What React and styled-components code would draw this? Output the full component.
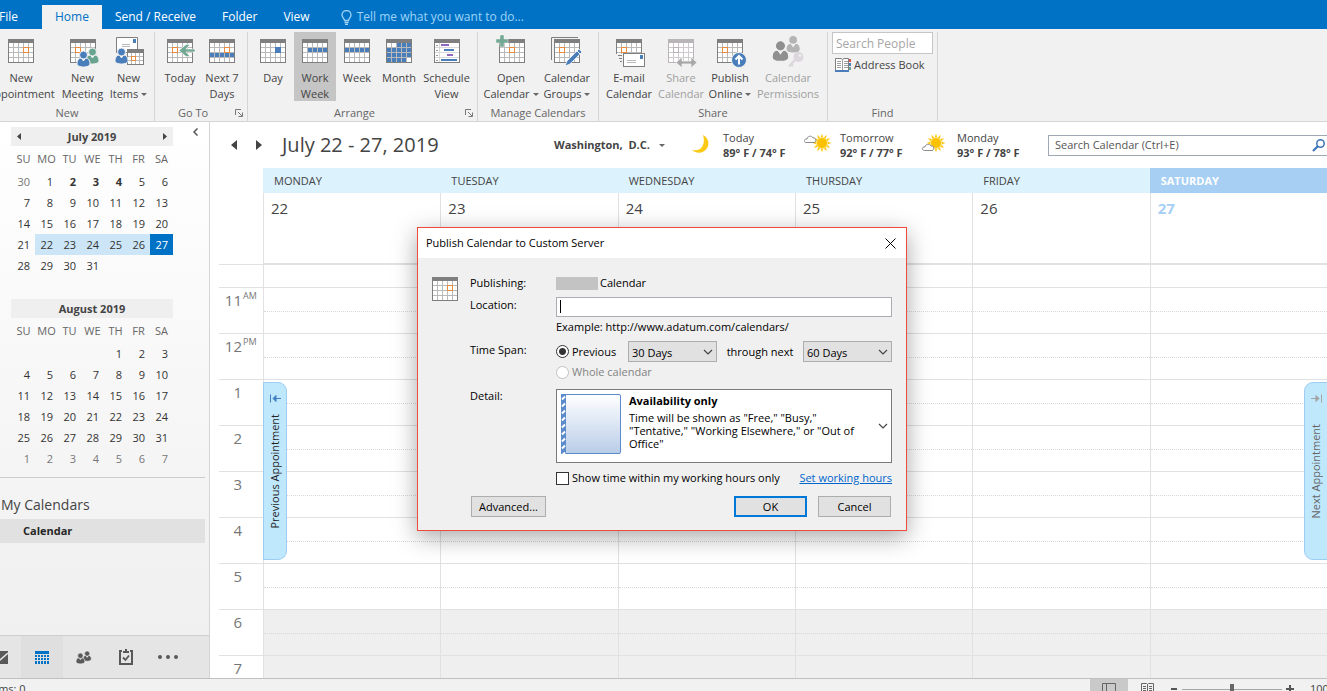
import { useState } from 'react';
import styled, { createGlobalStyle, css } from 'styled-components';

const GlobalStyle = createGlobalStyle`
  * {
    box-sizing: border-box;
  }

  body {
    margin: 0;
    overflow: hidden;
    background: #ffffff;
    color: #444444;
    font-family: 'Open Sans', 'Noto Sans', sans-serif;
    font-size: 11px;
    line-height: 16px;
  }

  button, input, select {
    font: inherit;
    color: inherit;
    margin: 0;
  }

  button {
    padding: 0;
    border: 0;
    background: none;
    white-space: nowrap;
  }

  svg {
    display: block;
    flex: none;
  }
`;

const Window = styled.div`
  display: flex;
  flex-direction: column;
  height: 100vh;
  overflow: hidden;
`;

/* ---------- tabs ---------- */

const TabBar = styled.nav`
  display: flex;
  flex: none;
  align-items: flex-end;
  height: 29px;
  background: #0072c6;
`;

const Tab = styled.button`
  height: 24px;
  padding: 0 13px;
  font-size: 12px;
  color: ${(p) => (p.$active ? '#0072c6' : '#ffffff')};
  background: ${(p) => (p.$active ? '#f1f1f1' : 'transparent')};
`;

const FileTab = styled(Tab)`
  width: 60px;
  margin-left: -18px;
  padding: 0 0 0 17px;
  text-align: left;
`;

const TellMe = styled.button`
  display: flex;
  align-items: center;
  gap: 5px;
  height: 24px;
  margin-left: 18px;
  font-size: 12px;
  color: #9fd2f5;
`;

/* ---------- ribbon ---------- */

const Ribbon = styled.div`
  display: flex;
  flex: none;
  height: 93px;
  padding-top: 3px;
  margin-left: -20px;
  background: #f1f1f1;
  border-bottom: 1px solid #d5d5d5;
`;

const Group = styled.section`
  display: flex;
  flex-direction: column;
  justify-content: space-between;
  padding: 0 4px;
  border-right: 1px solid #d5d5d5;
`;

const GroupButtons = styled.div`
  display: flex;
`;

const GroupFooter = styled.div`
  display: flex;
  align-items: center;
  gap: 8px;
  height: 16px;
  color: #666666;
`;

const GroupLabel = styled.span`
  flex: 1;
  text-align: center;
`;

const BigButton = styled.button`
  display: flex;
  flex-direction: column;
  align-items: center;
  width: ${(p) => p.$width}px;
  height: 69px;
  padding-top: 4px;
  background: ${(p) => (p.$active ? '#c5c5c5' : 'transparent')};
  color: ${(p) => (p.disabled ? '#a0a0a0' : '#444444')};

  svg {
    margin-bottom: 2px;
  }
`;

const LabelLine = styled.span`
  display: flex;
  align-items: center;
  gap: 3px;
`;

const Caret = styled.span`
  border: 3px solid transparent;
  border-top-color: #666666;
  border-bottom: 0;
`;

const FindColumn = styled.div`
  display: flex;
  flex-direction: column;
  gap: 3px;
  width: 101px;
`;

const PeopleInput = styled.input`
  width: 100%;
  height: 22px;
  padding: 0 3px;
  border: 1px solid #c6c6c6;
  font-size: 12px;

  &::placeholder {
    color: #a6a6a6;
  }
`;

const AddressButton = styled.button`
  display: flex;
  align-items: center;
  gap: 3px;
  padding-left: 3px;
`;

/* ---------- sidebar ---------- */

const Main = styled.main`
  display: flex;
  flex: 1;
  min-height: 0;
`;

const Sidebar = styled.aside`
  display: flex;
  flex: none;
  flex-direction: column;
  width: 210px;
  border-right: 1px solid #d5d5d5;
  background: linear-gradient(#ffffff, #f0f0f0 90%);
`;

const SidebarTop = styled.div`
  display: flex;
  justify-content: space-between;
  padding: 5px 11px 0 11px;
`;

const MonthStack = styled.div`
  display: flex;
  flex-direction: column;
  gap: 23px;
  width: 162px;
`;

const MonthHeader = styled.div`
  display: flex;
  align-items: center;
  justify-content: center;
  height: 19px;
  padding: 0 6px;
  background: #efefef;
  font-weight: 700;
`;

const MonthName = styled.span`
  flex: 1;
  text-align: center;
`;

const MonthTable = styled.table`
  width: 161px;
  margin-left: 1px;
  border-collapse: collapse;
  table-layout: fixed;

  th {
    height: 25px;
    padding: 0;
    font-weight: 400;
    color: #666666;
  }
`;

const DayCell = styled.td`
  height: 21px;
  padding: 0 5px 0 0;
  text-align: right;
  line-height: 20px;
  font-weight: ${(p) => (p.$bold ? 700 : 400)};
  color: ${(p) => (p.$muted ? '#777777' : '#333333')};

  ${(p) => p.$picked && css`
    background: #cde6f7;
  `}

  ${(p) => p.$today && css`
    background: #0072c6;
    color: #ffffff;
  `}
`;

const CollapseButton = styled.button`
  align-self: flex-start;
  padding-top: 1px;
`;

const Folders = styled.div`
  display: flex;
  flex: 1;
  flex-direction: column;
  margin: 8px 4px 0 0;
  padding-top: 18px;
  border-top: 1px solid #cccccc;
  min-height: 0;
`;

const FolderGroup = styled.h2`
  margin: 0 0 5px 1px;
  font-size: 14px;
  font-weight: 400;
  line-height: 18px;
`;

const Folder = styled.button`
  height: 24px;
  padding-left: 23px;
  background: #e1e1e1;
  font-weight: 700;
  text-align: left;
  color: #262626;
`;

const ModuleBar = styled.nav`
  display: flex;
  flex: none;
  height: 43px;
  padding-right: 20px;
  margin-left: -21px;
  border-top: 1px solid #cfcfcf;
  background: #e5e5e5;
`;

const ModuleButton = styled.button`
  display: grid;
  place-items: center;
  width: 42px;
  background: ${(p) => (p.$active ? '#dfdfdf' : 'transparent')};
`;

/* ---------- calendar ---------- */

const Calendar = styled.section`
  display: flex;
  flex: 1;
  flex-direction: column;
  min-width: 0;
`;

const Toolbar = styled.header`
  display: grid;
  grid-template-columns: 72px 272px 133px 117px 117px 127px 1fr;
  align-items: center;
  flex: none;
  height: 46px;
`;

const Arrows = styled.div`
  display: flex;
  gap: 19px;
  padding-left: 21px;
`;

const Range = styled.h1`
  margin: 0;
  font-size: 20px;
  font-weight: 400;
  line-height: 24px;
`;

const Place = styled.button`
  display: flex;
  align-items: center;
  gap: 9px;
  font-weight: 700;
  white-space: pre;
`;

const Weather = styled.div`
  display: grid;
  grid-template-columns: 36px 1fr;
  align-items: center;
  line-height: 15px;
`;

const Temps = styled.strong`
  display: block;
`;

const SearchBox = styled.label`
  display: flex;
  align-items: center;
  height: 21px;
  margin-right: -4px;
  padding: 0 4px 0 6px;
  border: 1px solid #a0a8b5;

  input {
    flex: 1;
    min-width: 0;
    padding: 0;
    border: 0;
    outline: 0;
    background: transparent;
  }

  input::placeholder {
    color: #555555;
  }
`;

const WeekRow = styled.div`
  display: grid;
  grid-template-columns: 44px repeat(6, 1fr);
  flex: none;
  padding-left: 9px;
`;

const DayName = styled.div`
  height: 25px;
  padding-left: 11px;
  line-height: 25px;
  background: ${(p) => (p.$today ? '#a6cff3' : '#dcf2fd')};
  color: ${(p) => (p.$today ? '#ffffff' : '#444444')};
  font-weight: ${(p) => (p.$today ? 700 : 400)};
`;

const AllDayGutter = styled.div`
  border-bottom: 1px solid #e1e1e1;
`;

const AllDay = styled.div`
  height: 72px;
  padding: 4px 0 0 7px;
  border-left: 1px solid #e1e1e1;
  border-bottom: 2px solid #e1e1e1;
  font-size: 15px;
  line-height: 22px;
  color: ${(p) => (p.$today ? '#a6cff3' : '#444444')};
  font-weight: ${(p) => (p.$today ? 700 : 400)};
`;

const Hours = styled.div`
  position: relative;
  flex: 1;
  min-height: 0;
  overflow: hidden;
`;

const HourLabel = styled.div`
  display: grid;
  grid-template-columns: 23px 1fr;
  column-gap: 1px;
  padding-top: 2px;
  border-top: 1px solid #e1e1e1;
  font-size: 15px;
  line-height: 20px;
  text-align: right;
  color: #767676;

  small {
    font-size: 9px;
    line-height: 12px;
    text-align: left;
  }
`;

const Slot = styled.div`
  height: 46px;
  border-top: 1px solid #e1e1e1;
  border-left: 1px solid #e1e1e1;
  background: ${(p) => (p.$off ? '#efefef' : '#ffffff')};

  &::before {
    content: '';
    display: block;
    height: 23px;
    border-bottom: 1px dotted #d9d9d9;
  }
`;

const HalfSlot = styled.div`
  height: 22px;
  border-left: 1px solid #e1e1e1;
`;

const JumpTab = styled.button`
  position: absolute;
  top: 117px;
  ${(p) => (p.$next ? 'right: -1px;' : 'left: 53px;')}
  display: flex;
  flex-direction: column;
  align-items: center;
  gap: ${(p) => (p.$next ? 21 : 11)}px;
  width: 24px;
  height: 178px;
  padding-top: 11px;
  border: 1px solid #9fcdf0;
  border-radius: ${(p) => (p.$next ? '9px 0 0 9px' : '0 9px 9px 0')};
  background: #c0e8fd;
  color: ${(p) => (p.$next ? '#666666' : '#262626')};
`;

const JumpText = styled.span`
  writing-mode: vertical-rl;
  transform: rotate(180deg);
`;

/* ---------- dialog ---------- */

const Dialog = styled.div`
  position: absolute;
  top: 227px;
  left: 417px;
  width: 490px;
  border: 1px solid #f04a3a;
  background: #f0f0f0;
  color: #000000;
  box-shadow: 0 6px 22px rgba(0, 0, 0, 0.35);
`;

const DialogTitle = styled.header`
  display: flex;
  align-items: center;
  justify-content: space-between;
  height: 30px;
  padding: 0 10px 0 8px;
  background: #ffffff;
`;

const DialogBody = styled.form`
  display: grid;
  grid-template-columns: 38px 1fr;
  padding: 16px 14px 13px;
`;

const IconCell = styled.div`
  padding-top: 3px;
`;

const Fields = styled.div`
  display: grid;
  grid-template-columns: 86px 1fr;
  grid-template-rows: 18px 25px 20px 25px 20px 81px 30px;
`;

const FieldLabel = styled.label`
  align-self: ${(p) => (p.$top ? 'start' : 'center')};
  line-height: ${(p) => (p.$top ? 28 : 24)}px;
`;

const Publishing = styled.div`
  display: flex;
  align-items: center;
  gap: 2px;
`;

const Redacted = styled.span`
  width: 42px;
  height: 13px;
  background: #c3c3c3;
`;

const LocationBox = styled.div`
  position: relative;
  align-self: end;
  height: 20px;

  input {
    width: 100%;
    height: 20px;
    padding: 0 4px;
    border: 1px solid #abadb3;
    background: #ffffff;
    outline: 0;
  }

  &::after {
    content: '';
    position: absolute;
    top: 3px;
    left: 4px;
    width: 1px;
    height: 13px;
    background: #000000;
  }
`;

const Example = styled.span`
  align-self: center;
`;

const SpanRow = styled.div`
  display: grid;
  grid-template-columns: 72px 89px 1fr 89px;
  align-items: end;
  text-align: center;
  line-height: 21px;
`;

const Choice = styled.label`
  grid-column: ${(p) => (p.$second ? 2 : 'auto')};
  display: flex;
  align-items: center;
  gap: 3px;
  color: ${(p) => (p.$disabled ? '#838383' : '#000000')};

  input {
    appearance: none;
    width: 13px;
    height: 13px;
    border: 1px solid ${(p) => (p.$disabled ? '#c3c3c3' : '#333333')};
    background: #ffffff;
  }

  input[type='radio'] {
    border-radius: 50%;
  }

  input[type='radio']:checked {
    background: radial-gradient(circle, #333333 3px, #ffffff 4px);
  }
`;

const SelectWrap = styled.div`
  display: grid;
  align-items: center;

  select {
    grid-area: 1 / 1;
    appearance: none;
    width: 100%;
    height: 21px;
    padding: 0 4px 0 3px;
    border: 1px solid #adadad;
    border-radius: 0;
    background: #e1e1e1;
  }

  svg {
    grid-area: 1 / 1;
    justify-self: end;
    margin-right: 4px;
    pointer-events: none;
  }
`;

const DetailPicker = styled.button`
  display: grid;
  grid-template-columns: 60px 1fr auto;
  column-gap: 8px;
  align-self: end;
  height: 74px;
  padding: 4px 3px 4px 4px;
  border: 1px solid #7a7a7a;
  background: #ffffff;
  line-height: 13px;
  text-align: left;

  strong {
    display: block;
    margin-bottom: 4px;
  }

  > svg:last-child {
    align-self: center;
  }
`;

const HoursOnly = styled.div`
  grid-column: 2;
  display: flex;
  align-items: center;
  justify-content: space-between;

  a {
    color: #0066cc;
  }
`;

const DialogButtons = styled.div`
  grid-column: 2;
  display: flex;
  gap: 11px;
  padding: 3px 1px 0;
`;

const DialogButton = styled.button`
  width: ${(p) => (p.$wide ? 75 : 73)}px;
  height: 21px;
  margin-right: ${(p) => (p.$wide ? 'auto' : 0)};
  border: ${(p) => (p.$primary ? '2px solid #0078d7' : '1px solid #adadad')};
  background: #e1e1e1;
`;

/* ---------- status bar ---------- */

const StatusBar = styled.footer`
  flex: none;
  height: 13px;
  overflow: hidden;
  border-top: 1px solid #c0c0c0;
  background: #f1f1f1;
`;

const StatusItems = styled.div`
  display: flex;
  align-items: center;
  height: 20px;
  margin: 0 -10px 0 -15px;
`;

const ViewButton = styled.button`
  display: grid;
  place-items: center;
  width: 38px;
  height: 20px;
  background: ${(p) => (p.$active ? '#c9c9c9' : 'transparent')};
`;

const ViewButtons = styled.div`
  display: flex;
  margin-left: auto;
`;

const Zoom = styled.div`
  display: flex;
  align-items: center;
  gap: 4px;
  padding-left: 4px;

  input {
    appearance: none;
    width: 100px;
    height: 12px;
    background: linear-gradient(#a6a6a6, #a6a6a6) center / 100% 1px no-repeat;
  }

  input::-webkit-slider-thumb {
    appearance: none;
    width: 4px;
    height: 11px;
    background: #666666;
  }
`;

const ZoomValue = styled.span`
  width: 27px;
  margin-left: 16px;
`;

/* ---------- icons ---------- */

function Grid({ x = 3, y = 3, mark, cells = [], frame = '#7f7f7f', line = '#b9b9b9', accent = '#e98b3a' }) {
  return (
    <g transform={`translate(${x} ${y})`} shapeRendering="crispEdges">
      <rect x="0.5" y="0.5" width="25" height="23" fill="#fff" stroke={frame} />
      <rect width="26" height="4" fill={frame} />
      <path d="M5.5 4v19M10.5 4v19M15.5 4v19M20.5 4v19M1 8.5h24M1 13.5h24M1 18.5h24" stroke={line} fill="none" />
      {cells.map(([c, r]) => (
        <rect key={`${c}-${r}`} x={1 + c * 5} y={4 + r * 5} width="4" height="4" fill="#4a7ebb" />
      ))}
      {mark && (
        <g>
          <rect x={mark[0] * 5} y={mark[1] * 5 + 3} width="6" height="6" fill={accent} />
          <rect x={mark[0] * 5 + 1} y={mark[1] * 5 + 4} width="4" height="4" fill="#fff" />
        </g>
      )}
    </g>
  );
}

function Person({ x, y, fill = '#4a7ebb', edge = '#f1f1f1' }) {
  return (
    <g transform={`translate(${x} ${y})`} stroke={edge} strokeWidth="1">
      <path d="M0 12.5c0-3.5 2-5.5 4.5-5.5l2 3 2-3C11 7 13 9 13 12.5 13 15 10 16 6.5 16S0 15 0 12.5z" fill={fill} />
      <circle cx="6.5" cy="4" r="4" fill={fill} />
    </g>
  );
}

const range = (n) => Array.from({ length: n }, (_, i) => i);
const monthCells = [[2, 0], [3, 0], [4, 0], ...range(5).map((c) => [c, 1]), ...range(5).map((c) => [c, 2]), ...range(4).map((c) => [c, 3])];

const ribbonIcons = {
  appointment: <Grid mark={[3, 1]} />,
  meeting: (
    <>
      <Grid mark={[1, 1]} />
      <Person x={19} y={12} fill="#68a490" />
      <Person x={10} y={15} />
    </>
  ),
  items: (
    <>
      <path d="M3.5 1.5h21v15h-21z" fill="#fff" stroke="#7f7f7f" />
      <path d="M9 8.5h8M9 10.5h8" stroke="#b9b9b9" />
      <rect x="20" y="3" width="3" height="4" fill="#4a7ebb" />
      <g shapeRendering="crispEdges">
        <rect x="14.5" y="13.5" width="16" height="15" fill="#fff" stroke="#7f7f7f" />
        <rect x="14" y="13" width="17" height="4" fill="#7f7f7f" />
        <path d="M18.5 17v11M22.5 17v11M26.5 17v11M15 20.500h15M15 24.500h15" stroke="#b9b9b9" />
        <rect x="18.5" y="20.5" width="4" height="4" fill="#fff" stroke="#e98b3a" />
      </g>
      <Person x={2} y={12} />
    </>
  ),
  today: (
    <>
      <Grid mark={[1, 1]} />
      <path d="M31 13H22l4-4.500h-4l-7 6 7 6h4L22 16h9z" fill="#72a894" stroke="#fff" strokeWidth="0.6" />
    </>
  ),
  next7: <Grid cells={range(5).map((c) => [c, 2])} mark={[3, 1]} />,
  day: (
    <>
      <Grid />
      <rect x="18" y="11" width="6" height="6" fill="#4a7ebb" />
    </>
  ),
  workWeek: <Grid cells={[1, 2, 3, 4].map((c) => [c, 1])} />,
  week: <Grid cells={range(5).map((c) => [c, 1])} />,
  month: <Grid cells={monthCells} />,
  schedule: (
    <g transform="translate(3 3)" shapeRendering="crispEdges">
      <rect x="0.5" y="0.5" width="25" height="23" fill="#fff" stroke="#7f7f7f" />
      <rect width="26" height="4" fill="#7f7f7f" />
      <path d="M5.5 4v19M1 8.5h24M1 13.5h24M1 18.5h24" stroke="#d9d9d9" />
      <path d="M2 6.5h2M2 11.5h2M2 16.5h2M2 21.5h2" stroke="#9a9a9a" />
      <path d="M7 6h8M13 16h6" stroke="#9068be" strokeWidth="2" />
      <path d="M10 11h10M7 21h16" stroke="#4a7ebb" strokeWidth="2" />
    </g>
  ),
  open: (
    <>
      <Grid x={4} mark={[2, 1]} />
      <path d="M5-1h4v4h4v4H9v4H5V7H1V3h4z" fill="#72a894" stroke="#f1f1f1" strokeWidth="0.5" />
    </>
  ),
  groups: (
    <>
      <path d="M0.5 24V1.5H27" fill="none" stroke="#7f7f7f" />
      <Grid mark={[1, 1]} />
      <path d="M28 13l3 3-12 12-5 2 2-5z" fill="#4a7ebb" stroke="#fff" strokeWidth="0.7" />
      <path d="M26 15l3 3" stroke="#fff" />
    </>
  ),
  email: (
    <>
      <Grid mark={[1, 1]} />
      <rect x="2" y="18" width="28" height="13" fill="#f1f1f1" />
      <path d="M5 19.5h4M6 22.5h3M7 25.5h2" stroke="#7f7f7f" />
      <rect x="10.5" y="17.5" width="21" height="13" fill="#fff" stroke="#7f7f7f" />
      <path d="M14 24.5h9M14 26.5h9" stroke="#b9b9b9" />
      <rect x="27" y="19" width="3" height="4" fill="#4a7ebb" />
    </>
  ),
  share: (
    <>
      <Grid mark={[1, 1]} frame="#b8b4b8" line="#cfcad0" accent="#b8b4b8" />
      <path d="M11 26.500l6-5.500v4h9v-4l6 5.500-6 5.500v-4h-9v4z" fill="#a8a8a8" stroke="#f1f1f1" strokeWidth="0.8" />
    </>
  ),
  publish: (
    <>
      <Grid mark={[1, 1]} />
      <circle cx="25" cy="24" r="7.500" fill="#4a7ebb" stroke="#f1f1f1" />
      <path d="M25 28.5v-8M21.500 23.5l3.5-3.5 3.5 3.5" fill="none" stroke="#fff" strokeWidth="2" />
    </>
  ),
  permissions: (
    <>
      <g transform="translate(14 -1) scale(1.1)">
        <Person x={0} y={0.5} fill="#b4b4b4" />
      </g>
      <g transform="translate(0 4) scale(1.3)">
        <Person x={0} y={0.5} fill="#8f8f8f" />
      </g>
      <circle cx="26.5" cy="21" r="5" fill="#dcd7dc" />
      <path d="M23 24l-6 6.5M19 28l2 2" stroke="#dcd7dc" strokeWidth="2.5" />
      <circle cx="28" cy="19.5" r="1.3" fill="#f1f1f1" />
    </>
  ),
};

function RibbonIcon({ name }) {
  return (
    <svg width="32" height="32" viewBox="0 0 32 32" overflow="visible" aria-hidden="true">
      {ribbonIcons[name]}
    </svg>
  );
}

function Chevron({ size = 10, color = '#444444' }) {
  return (
    <svg width={size} height={size} viewBox="0 0 10 10" fill="none" stroke={color} aria-hidden="true">
      <path d="M1 3l4 4 4-4" strokeWidth="1.2" />
    </svg>
  );
}

function Triangle({ left, width = 5, height = 8 }) {
  return (
    <svg width={width} height={height} viewBox="0 0 5 8" preserveAspectRatio="none" aria-hidden="true">
      <path d={left ? 'M5 0v8L0 4z' : 'M0 0v8l5-4z'} fill="#444" />
    </svg>
  );
}

function Launcher() {
  return (
    <svg width="8" height="8" viewBox="0 0 8 8" fill="none" stroke="#777" aria-hidden="true">
      <path d="M0.5 6V0.5H6M3 3l4 4M7.5 3.5v4h-4" />
    </svg>
  );
}

function Sun({ cx, cy }) {
  const points = range(24).map((i) => {
    const r = i % 2 ? 5.5 : 9.5;
    const a = (i * Math.PI) / 12;
    return `${cx + r * Math.sin(a)},${cy - r * Math.cos(a)}`;
  });
  return (
    <>
      <polygon points={points.join(' ')} fill="#fcc917" />
      <circle cx={cx} cy={cy} r="5.5" fill="#fcc200" stroke="#fff1b8" strokeWidth="0.8" />
    </>
  );
}

function WeatherIcon({ kind }) {
  return (
    <svg width="28" height="22" viewBox="0 0 28 22" aria-hidden="true">
      {kind === 'moon' && <path d="M16 1c6 3 7 10 3 14.500-4 4.500-10 4-14 0.500 5 1 8.500 0 10.500-4 2-3.500 1.500-7.500 0.500-11z" fill="#fcc917" />}
      {kind === 'cloudSun' && (
        <>
          <Sun cx={18} cy={9} />
          <path d="M2 8.500C-1 8 0 4.500 3 5c0-3 5-4 6-1 3-1 4 4 1 4.500z" fill="#fff" stroke="#8a8a8a" />
        </>
      )}
      {kind === 'sunCloud' && (
        <>
          <Sun cx={15} cy={9} />
          <path d="M3.500 16.500C0 16 1 12.500 4 13c0-3 5-3.500 6-1 3-1 4 4 1 4.500z" fill="#fff" stroke="#8a8a8a" />
        </>
      )}
    </svg>
  );
}

/* ---------- data ---------- */

const weekdays = ['SU', 'MO', 'TU', 'WE', 'TH', 'FR', 'SA'];

const months = [
  { name: 'July 2019', arrows: true, days: [30, ...range(31).map((i) => i + 1)], lead: 0, muted: (i) => i === 0, bold: [2, 3, 4], picked: [22, 23, 24, 25, 26], today: 27 },
  { name: 'August 2019', days: [...range(31).map((i) => i + 1), ...range(7).map((i) => i + 1)], lead: 4, muted: (i) => i > 34, bold: [], picked: [] },
];

const ribbon = [
  {
    label: 'New',
    buttons: [
      { icon: 'appointment', lines: ['New', 'Appointment'], width: 74 },
      { icon: 'meeting', lines: ['New', 'Meeting'], width: 49 },
      { icon: 'items', lines: ['New', 'Items'], width: 43, menu: true },
    ],
  },
  {
    label: 'Go To',
    launcher: true,
    buttons: [
      { icon: 'today', lines: ['Today'], width: 42 },
      { icon: 'next7', lines: ['Next 7', 'Days'], width: 42 },
    ],
  },
  {
    label: 'Arrange',
    launcher: true,
    buttons: [
      { icon: 'day', lines: ['Day'], width: 42 },
      { icon: 'workWeek', lines: ['Work', 'Week'], width: 42, active: true },
      { icon: 'week', lines: ['Week'], width: 42 },
      { icon: 'month', lines: ['Month'], width: 42 },
      { icon: 'schedule', lines: ['Schedule', 'View'], width: 53 },
    ],
  },
  {
    label: 'Manage Calendars',
    buttons: [
      { icon: 'open', lines: ['Open', 'Calendar'], width: 58, menu: true },
      { icon: 'groups', lines: ['Calendar', 'Groups'], width: 54, menu: true },
    ],
  },
  {
    label: 'Share',
    buttons: [
      { icon: 'email', lines: ['E-mail', 'Calendar'], width: 52 },
      { icon: 'share', lines: ['Share', 'Calendar'], width: 52, disabled: true },
      { icon: 'publish', lines: ['Publish', 'Online'], width: 46, menu: true },
      { icon: 'permissions', lines: ['Calendar', 'Permissions'], width: 70, disabled: true },
    ],
  },
];

const days = [
  { name: 'MONDAY', date: 22 },
  { name: 'TUESDAY', date: 23 },
  { name: 'WEDNESDAY', date: 24 },
  { name: 'THURSDAY', date: 25 },
  { name: 'FRIDAY', date: 26 },
  { name: 'SATURDAY', date: 27, today: true },
];

const hours = [
  { label: 11, half: 'AM' },
  { label: 12, half: 'PM' },
  { label: 1 },
  { label: 2 },
  { label: 3 },
  { label: 4 },
  { label: 5 },
  { label: 6, off: true },
  { label: 7, off: true },
];

const forecast = [
  { kind: 'moon', day: 'Today', temps: '89° F / 74° F' },
  { kind: 'cloudSun', day: 'Tomorrow', temps: '92° F / 77° F' },
  { kind: 'sunCloud', day: 'Monday', temps: '93° F / 78° F' },
];

/* ---------- parts ---------- */

function MiniMonth({ month }) {
  const cells = [...range(month.lead).map(() => null), ...month.days];
  const rows = range(Math.ceil(cells.length / 7)).map((r) => cells.slice(r * 7, r * 7 + 7));
  return (
    <div>
      <MonthHeader>
        {month.arrows && <button type="button" aria-label="Previous month"><Triangle left width={4} height={7} /></button>}
        <MonthName>{month.name}</MonthName>
        {month.arrows && <button type="button" aria-label="Next month"><Triangle width={4} height={7} /></button>}
      </MonthHeader>
      <MonthTable>
        <thead>
          <tr>{weekdays.map((d) => <th key={d}>{d}</th>)}</tr>
        </thead>
        <tbody>
          {rows.map((row, r) => (
            <tr key={r}>
              {row.map((day, c) => {
                const muted = month.muted(r * 7 + c);
                return (
                  <DayCell
                    key={c}
                    $muted={muted}
                    $bold={!muted && month.bold.includes(day)}
                    $picked={month.picked.includes(day)}
                    $today={day !== null && day === month.today}
                  >
                    {day}
                  </DayCell>
                );
              })}
            </tr>
          ))}
        </tbody>
      </MonthTable>
    </div>
  );
}

function RibbonBar() {
  return (
    <Ribbon>
      {ribbon.map((group) => (
        <Group key={group.label}>
          <GroupButtons>
            {group.buttons.map((b) => (
              <BigButton key={b.icon} type="button" $width={b.width} $active={b.active} disabled={b.disabled}>
                <RibbonIcon name={b.icon} />
                {b.lines.map((line, i) => (
                  <LabelLine key={line}>
                    {line}
                    {b.menu && i === 1 && <Caret />}
                  </LabelLine>
                ))}
              </BigButton>
            ))}
          </GroupButtons>
          <GroupFooter>
            <GroupLabel>{group.label}</GroupLabel>
            {group.launcher && <button type="button" aria-label={`${group.label} options`}><Launcher /></button>}
          </GroupFooter>
        </Group>
      ))}
      <Group>
        <FindColumn>
          <PeopleInput placeholder="Search People" aria-label="Search People" />
          <AddressButton type="button">
            <svg width="16" height="14" viewBox="0 0 16 14" fill="none" aria-hidden="true">
              <path d="M0.5 0.5h6L7.5 2l1-1.5h5v12h-13z" fill="#fff" stroke="#7f7f7f" />
              <path d="M0 13h14" stroke="#4a7ebb" strokeWidth="2" />
              <path d="M7.5 1v11M2 3.5h4M2 5.5h4M2 7.5h4M2 9.5h4M9 3.5h4M9 5.5h4M9 7.5h4M9 9.5h4" stroke="#a0a0a0" />
              <path d="M15 1v3" stroke="#d9534f" strokeWidth="2" />
              <path d="M15 5v3" stroke="#4a7ebb" strokeWidth="2" />
              <path d="M15 9v3" stroke="#68a490" strokeWidth="2" />
            </svg>
            Address Book
          </AddressButton>
        </FindColumn>
        <GroupFooter>
          <GroupLabel>Find</GroupLabel>
        </GroupFooter>
      </Group>
    </Ribbon>
  );
}

function ModuleNav() {
  return (
    <ModuleBar>
      <ModuleButton type="button" aria-label="Mail">
        <svg width="16" height="13" viewBox="0 0 16 13">
          <path d="M0 0h16v13H0z" fill="#595959" />
          <path d="M0 4l6 5h2l8-7" fill="none" stroke="#e5e5e5" strokeWidth="1.5" />
        </svg>
      </ModuleButton>
      <ModuleButton type="button" aria-label="Calendar" $active>
        <svg width="14" height="13" viewBox="0 0 14 13" shapeRendering="crispEdges">
          <path d="M0 0h14v13H0z" fill="#0072c6" />
          <path d="M0 3.5h14M0 6.5h14M0 9.5h14M2.5 3v10M5.5 3v10M8.5 3v10M11.5 3v10" stroke="#dfdfdf" />
        </svg>
      </ModuleButton>
      <ModuleButton type="button" aria-label="People">
        <svg width="16" height="13" viewBox="0 0 16 13">
          <g transform="translate(7 0) scale(0.64)"><Person x={0} y={0} fill="#595959" edge="#e5e5e5" /></g>
          <g transform="translate(0 2) scale(0.68)"><Person x={0} y={0} fill="#595959" edge="#e5e5e5" /></g>
        </svg>
      </ModuleButton>
      <ModuleButton type="button" aria-label="Tasks">
        <svg width="14" height="16" viewBox="0 0 14 16" fill="none" stroke="#595959">
          <path d="M3 2H1v13h12V2h-2" strokeWidth="2" />
          <path d="M4 4V2h2V0h2v2h2v2z" fill="#595959" stroke="none" />
          <path d="M4 8.5L6.5 11 10 6.5" strokeWidth="1.8" />
        </svg>
      </ModuleButton>
      <ModuleButton type="button" aria-label="More">
        <svg width="20" height="4" viewBox="0 0 20 4" fill="#595959">
          <circle cx="2" cy="2" r="2" />
          <circle cx="10" cy="2" r="2" />
          <circle cx="18" cy="2" r="2" />
        </svg>
      </ModuleButton>
    </ModuleBar>
  );
}

function JumpIcon({ next }) {
  const color = next ? '#a3a3a3' : '#3f7fc1';
  return (
    <svg width="11" height="9" viewBox="0 0 11 9" fill={color} stroke={color} aria-hidden="true">
      {next ? (
        <path d="M10.5 0.5v8M0 4.500h5M5 1.500l3 3-3 3z" />
      ) : (
        <path d="M0.5 0.5v8M6 4.500h5M6 1.500l-3 3 3 3z" />
      )}
    </svg>
  );
}

function CalendarView() {
  return (
    <Calendar>
      <Toolbar>
        <Arrows>
          <button type="button" aria-label="Back"><Triangle left width={6} height={10} /></button>
          <button type="button" aria-label="Forward"><Triangle width={6} height={10} /></button>
        </Arrows>
        <Range>July 22 - 27, 2019</Range>
        <Place type="button">
          {'Washington,  D.C.'}
          <Caret />
        </Place>
        {forecast.map((f) => (
          <Weather key={f.day}>
            <WeatherIcon kind={f.kind} />
            <div>
              {f.day}
              <Temps>{f.temps}</Temps>
            </div>
          </Weather>
        ))}
        <SearchBox>
          <input placeholder="Search Calendar (Ctrl+E)" aria-label="Search Calendar" />
          <svg width="14" height="13" viewBox="0 0 14 13" fill="none" stroke="#3b73b9" aria-hidden="true">
            <circle cx="8.5" cy="4.5" r="3.7" strokeWidth="1.5" />
            <path d="M6 7l-5 5" strokeWidth="2.2" />
          </svg>
        </SearchBox>
      </Toolbar>
      <WeekRow>
        <span />
        {days.map((d) => <DayName key={d.name} $today={d.today}>{d.name}</DayName>)}
      </WeekRow>
      <WeekRow>
        <AllDayGutter />
        {days.map((d) => <AllDay key={d.name} $today={d.today}>{d.date}</AllDay>)}
      </WeekRow>
      <Hours>
        <WeekRow>
          <span />
          {days.map((d) => <HalfSlot key={d.name} />)}
        </WeekRow>
        {hours.map((h) => (
          <WeekRow key={h.label}>
            <HourLabel>
              {h.label}
              {h.half && <small>{h.half}</small>}
            </HourLabel>
            {days.map((d) => <Slot key={d.name} $off={h.off} />)}
          </WeekRow>
        ))}
        <JumpTab type="button">
          <JumpIcon />
          <JumpText>Previous Appointment</JumpText>
        </JumpTab>
        <JumpTab type="button" $next>
          <JumpIcon next />
          <JumpText>Next Appointment</JumpText>
        </JumpTab>
      </Hours>
    </Calendar>
  );
}

function PublishDialog() {
  const [location, setLocation] = useState('');
  return (
    <Dialog role="dialog" aria-labelledby="publish-title">
      <DialogTitle>
        <span id="publish-title">Publish Calendar to Custom Server</span>
        <button type="button" aria-label="Close">
          <svg width="11" height="11" viewBox="0 0 11 11" stroke="#000" aria-hidden="true">
            <path d="M0.5 0.5l10 10M10.5 0.5l-10 10" />
          </svg>
        </button>
      </DialogTitle>
      <DialogBody onSubmit={(e) => e.preventDefault()}>
        <IconCell>
          <svg width="26" height="24" viewBox="0 0 26 24" aria-hidden="true">
            <Grid x={0} y={0} mark={[3, 1]} />
          </svg>
        </IconCell>
        <Fields>
          <FieldLabel as="span">Publishing:</FieldLabel>
          <Publishing>
            <Redacted />
            Calendar
          </Publishing>
          <FieldLabel htmlFor="location">Location:</FieldLabel>
          <LocationBox>
            <input id="location" value={location} onChange={(e) => setLocation(e.target.value)} />
          </LocationBox>
          <span />
          <Example>Example: http://www.adatum.com/calendars/</Example>
          <FieldLabel as="span">Time Span:</FieldLabel>
          <SpanRow>
            <Choice>
              <input type="radio" name="span" defaultChecked />
              Previous
            </Choice>
            <SelectWrap>
              <select aria-label="Previous days">
                <option>30 Days</option>
              </select>
              <Chevron />
            </SelectWrap>
            <span>through next</span>
            <SelectWrap>
              <select aria-label="Next days">
                <option>60 Days</option>
              </select>
              <Chevron />
            </SelectWrap>
          </SpanRow>
          <Choice $second $disabled>
            <input type="radio" name="span" disabled />
            Whole calendar
          </Choice>
          <FieldLabel htmlFor="detail" $top>Detail:</FieldLabel>
          <DetailPicker type="button" id="detail">
            <svg width="60" height="61" viewBox="0 0 60 61" aria-hidden="true">
              <defs>
                <linearGradient id="page" x2="0" y2="1">
                  <stop offset="0" stopColor="#fff" />
                  <stop offset="1" stopColor="#b9cde8" />
                </linearGradient>
                <pattern id="stripes" width="5" height="7" patternUnits="userSpaceOnUse">
                  <rect width="5" height="7" fill="#5b8bcb" />
                  <path d="M1 5.5l3-3" stroke="#fff" strokeWidth="2" />
                </pattern>
              </defs>
              <rect x="0.5" y="0.5" width="59" height="59" rx="1.5" fill="url(#page)" stroke="#5b8bcb" />
              <rect width="5" height="60" fill="url(#stripes)" />
            </svg>
            <span>
              <strong>Availability only</strong>
              Time will be shown as "Free," "Busy,"
              <br />
              "Tentative," "Working Elsewhere," or "Out of
              <br />
              Office"
            </span>
            <Chevron />
          </DetailPicker>
          <HoursOnly>
            <Choice>
              <input type="checkbox" />
              Show time within my working hours only
            </Choice>
            <a href="#hours">Set working hours</a>
          </HoursOnly>
        </Fields>
        <DialogButtons>
          <DialogButton type="button" $wide>Advanced...</DialogButton>
          <DialogButton type="submit" $primary>OK</DialogButton>
          <DialogButton type="button">Cancel</DialogButton>
        </DialogButtons>
      </DialogBody>
    </Dialog>
  );
}

export default function App() {
  return (
    <Window>
      <GlobalStyle />
      <TabBar>
        <FileTab type="button">File</FileTab>
        <Tab type="button" $active>Home</Tab>
        <Tab type="button">Send / Receive</Tab>
        <Tab type="button">Folder</Tab>
        <Tab type="button">View</Tab>
        <TellMe type="button">
          <svg width="11" height="15" viewBox="0 0 11 15" fill="none" stroke="#9fd2f5" aria-hidden="true">
            <path d="M3.5 10.5c0-2-2.500-3-2.500-5.500a4.500 4.500 0 0 1 9 0c0 2.500-2.500 3.500-2.500 5.500zM3.500 12.500h4M4 14.500h3" strokeWidth="1.3" />
          </svg>
          Tell me what you want to do...
        </TellMe>
      </TabBar>
      <RibbonBar />
      <Main>
        <Sidebar>
          <SidebarTop>
            <MonthStack>
              {months.map((m) => <MiniMonth key={m.name} month={m} />)}
            </MonthStack>
            <CollapseButton type="button" aria-label="Collapse pane">
              <svg width="5" height="8" viewBox="0 0 5 8" fill="none" stroke="#555" aria-hidden="true">
                <path d="M4.5 0.5L1 4l3.5 3.5" strokeWidth="1.5" />
              </svg>
            </CollapseButton>
          </SidebarTop>
          <Folders>
            <FolderGroup>My Calendars</FolderGroup>
            <Folder type="button">Calendar</Folder>
          </Folders>
          <ModuleNav />
        </Sidebar>
        <CalendarView />
      </Main>
      <StatusBar>
        <StatusItems>
          <span>Items: 0</span>
          <ViewButtons>
            <ViewButton type="button" aria-label="Normal view" $active>
              <svg width="14" height="13" viewBox="0 0 14 13" fill="none" stroke="#666">
                <path d="M0.5 0.5h13v12H0.5zM4.5 0v13" />
              </svg>
            </ViewButton>
            <ViewButton type="button" aria-label="Reading view">
              <svg width="13" height="13" viewBox="0 0 13 13" fill="none" stroke="#666">
                <path d="M0.5 0.5h5l1 1 1-1h5v11h-5l-1 1-1-1h-5zM6.5 1v11M2 3.5h3M2 5.5h3M2 7.5h3M8 3.5h3M8 5.5h3M8 7.5h3" />
              </svg>
            </ViewButton>
          </ViewButtons>
          <Zoom>
            <button type="button" aria-label="Zoom out">
              <svg width="8" height="8" viewBox="0 0 8 8"><path d="M1 4h6" stroke="#555" strokeWidth="2" /></svg>
            </button>
            <input type="range" aria-label="Zoom" defaultValue="50" />
            <button type="button" aria-label="Zoom in">
              <svg width="8" height="8" viewBox="0 0 8 8"><path d="M0 4h8M4 0v8" stroke="#555" strokeWidth="2" /></svg>
            </button>
          </Zoom>
          <ZoomValue>100%</ZoomValue>
        </StatusItems>
      </StatusBar>
      <PublishDialog />
    </Window>
  );
}
